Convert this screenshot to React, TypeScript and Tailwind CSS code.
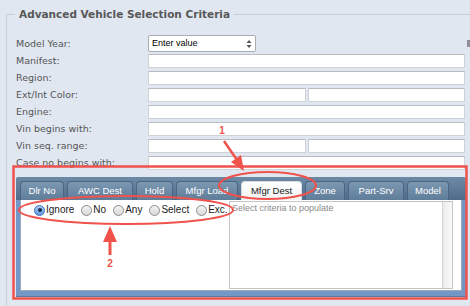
import React from 'react';

type RowKind = 'select' | 'single' | 'split';

const ROWS: { label: string; kind: RowKind }[] = [
  { label: 'Model Year:', kind: 'select' },
  { label: 'Manifest:', kind: 'single' },
  { label: 'Region:', kind: 'single' },
  { label: 'Ext/Int Color:', kind: 'split' },
  { label: 'Engine:', kind: 'single' },
  { label: 'Vin begins with:', kind: 'single' },
  { label: 'Vin seq. range:', kind: 'split' },
  { label: 'Case no begins with:', kind: 'single' },
];

// largeurs mesurées sur la capture
const TABS = [
  { name: 'Dlr No', w: 'w-[44px]' },
  { name: 'AWC Dest', w: 'w-[66px]' },
  { name: 'Hold', w: 'w-[37px]' },
  { name: 'Mfgr Load', w: 'w-[62px]' },
  { name: 'Mfgr Dest', w: 'w-[61px]', active: true },
  { name: 'Zone', w: 'w-[40px]' },
  { name: 'Part-Srv', w: 'w-[56px]' },
  { name: 'Model', w: 'w-[42px]' },
];

const RADIOS = ['Ignore', 'No', 'Any', 'Select', 'Exc.'];

const TextBox = ({ className = '' }: { className?: string }) => (
  <div className={`h-[14px] bg-white border border-[#cfd3d8] border-t-[#b8bcc2] ${className}`} />
);

const Radio = ({ checked }: { checked?: boolean }) =>
  checked ? (
    <span className="w-[11px] h-[11px] rounded-full border border-[#3b6fb6] bg-gradient-to-b from-[#a9ccf4] to-[#5f98e0] flex items-center justify-center">
      <span className="w-[4px] h-[4px] rounded-full bg-[#1b2a44]" />
    </span>
  ) : (
    <span className="w-[11px] h-[11px] rounded-full border border-[#8c8c8c] bg-gradient-to-b from-[#f4f4f4] to-[#d8d8d8]" />
  );

const FieldRow = ({ label, kind }: { label: string; kind: RowKind }) => (
  <div className={`flex items-center ${kind === 'select' ? 'h-[17px] mb-[2px]' : 'h-[14px] mb-[3px]'}`}>
    <div className="w-[132px] leading-none">{label}</div>
    {kind === 'select' && (
      <div className="w-[322px] flex items-center">
        <div className="w-[108px] h-[17px] bg-white border border-[#a9acb0] rounded-[2px] flex items-center pl-[3px] pr-[3px] font-['Liberation_Sans',sans-serif] text-[9px] text-black">
          <span className="flex-1">Enter value</span>
          <svg width="6" height="10" viewBox="0 0 6 10">
            <path d="M3 1 L5.5 4 L0.5 4 Z" fill="#555" />
            <path d="M3 9 L5.5 6 L0.5 6 Z" fill="#555" />
          </svg>
        </div>
        <span className="ml-auto w-[3px] h-[7px] bg-[#8d9197]" />
      </div>
    )}
    {kind === 'single' && <TextBox className="w-[317px]" />}
    {kind === 'split' && (
      <div className="w-[317px] flex gap-[2px]">
        <TextBox className="w-[158px]" />
        <TextBox className="flex-1" />
      </div>
    )}
  </div>
);

const TabWidget = () => (
  <div className="w-[450px] mt-[7px] font-['Liberation_Sans',Arial,sans-serif]">
    <div className="h-[23px] bg-gradient-to-b from-[#6c89a5] to-[#4f6d8b] flex items-end pl-[4px] gap-[3px] rounded-t-[2px]">
      {TABS.map((tab) => (
        <div
          key={tab.name}
          className={`${tab.w} h-[19px] rounded-t-[4px] flex items-center justify-center text-[9.5px] border border-b-0 ${
            tab.active
              ? 'bg-gradient-to-b from-white to-[#f2f2f2] text-[#222] border-[#d8dde3]'
              : 'bg-gradient-to-b from-[#7c98b3] to-[#5f7d99] text-white border-[#4a6682]'
          }`}
        >
          {tab.name}
        </div>
      ))}
    </div>
    <div className="bg-[#7497c6] px-[4px] pb-[5px] border-b border-[#5b7aa8]">
      <div className="h-[91px] bg-white flex border border-[#9aa9bb] border-t-0">
        <div className="w-[208px] pl-[13px] pt-[4px]">
          <div className="flex items-center gap-[7px] h-[12px] text-[10px] text-[#222]">
            {RADIOS.map((r, i) => (
              <label key={r} className="flex items-center gap-[1px]">
                <Radio checked={i === 0} />
                <span className="leading-none">{r}</span>
              </label>
            ))}
          </div>
        </div>
        <div className="w-[224px] h-[88px] mt-[1px] border border-[#c4c4c4] flex">
          <div className="flex-1 pl-[2px] pt-[1px] text-[9px] text-[#8a8a8a] leading-[11px]">Select criteria to populate</div>
          <div className="w-[10px] border-l border-[#d4d4d4] bg-gradient-to-r from-[#ececec] to-[#f9f9f9]" />
        </div>
      </div>
    </div>
  </div>
);

const Annotations = () => (
  <svg className="absolute inset-0 pointer-events-none" width="470" height="306" viewBox="0 0 470 306">
    <rect x="13.5" y="166.5" width="453" height="132" fill="none" stroke="#f0524c" strokeWidth="2.5" />
    <ellipse cx="267.5" cy="185.5" rx="48.5" ry="13.5" fill="none" stroke="#f0524c" strokeWidth="2" />
    <ellipse cx="126" cy="210" rx="107" ry="14" fill="none" stroke="#f0524c" strokeWidth="2" />
    <line x1="224" y1="141" x2="237" y2="160" stroke="#f0524c" strokeWidth="2.5" />
    <polygon points="244,171 231,162 241,155" fill="#f0524c" />
    <line x1="110" y1="240" x2="110" y2="255" stroke="#f0524c" strokeWidth="3" />
    <polygon points="110,226 117,242 103,242" fill="#f0524c" />
    <text x="222" y="134" textAnchor="middle" fontSize="10" fontWeight="bold" fill="#f0524c" fontFamily="Liberation Sans, Arial, sans-serif">1</text>
    <text x="110" y="267" textAnchor="middle" fontSize="10" fontWeight="bold" fill="#f0524c" fontFamily="Liberation Sans, Arial, sans-serif">2</text>
  </svg>
);

export default function App() {
  return (
    <div className="relative w-[470px] h-[306px] overflow-hidden bg-[#e0e7f1] font-['DejaVu_Sans',Verdana,sans-serif] text-[9.5px] text-[#555]">
      <fieldset className="ml-[6px] mt-[7px] h-[320px] border-l border-t border-[#c9ced5]">
        <legend className="ml-[8px] px-[4px] h-[14px] leading-[14px] text-[10.5px] font-bold text-[#585858]">
          Advanced Vehicle Selection Criteria
        </legend>
        <div className="pl-[9px] pt-[14px]">
          {ROWS.map((row) => (
            <FieldRow key={row.label} label={row.label} kind={row.kind} />
          ))}
          <TabWidget />
        </div>
      </fieldset>
      <Annotations />
    </div>
  );
}
